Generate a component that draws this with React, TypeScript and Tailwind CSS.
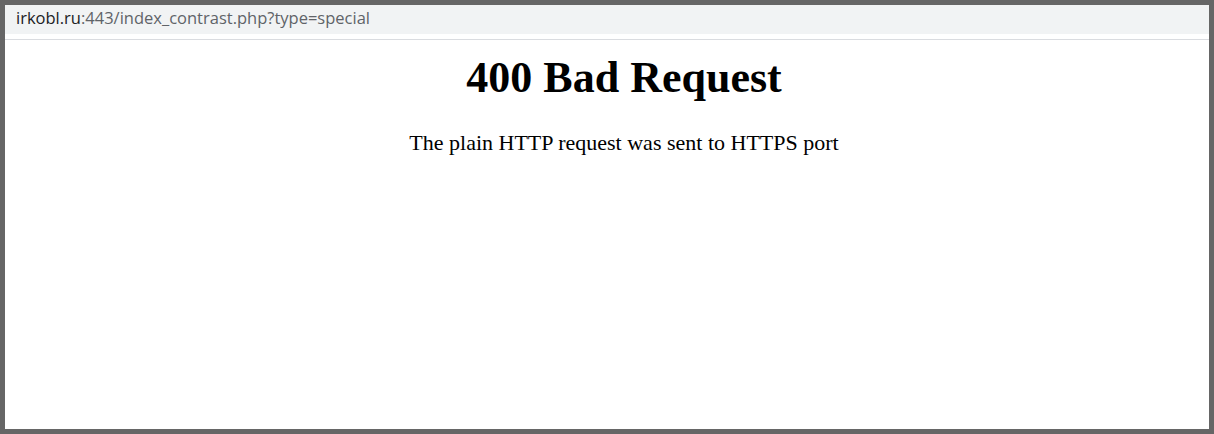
export default function App() {
  return (
    <div className="h-[434px] w-[1214px] overflow-hidden border-[5px] border-[#666666] bg-white">
      <div className="flex h-full flex-col">
        {/* address bar */}
        <div className="flex h-[29px] items-center bg-[#f1f3f4] pb-[3px] pl-[11px] font-['Open_Sans',sans-serif] text-[16.5px] leading-none">
          <span className="text-[#202124]">irkobl.ru</span>
          <span className="text-[#5f6368]">:443/index_contrast.php?type=special</span>
        </div>
        <div className="h-[5px] bg-white" />
        <div className="h-px bg-[#dadce0]" />
        {/* page */}
        <div className="flex flex-1 flex-col items-center pl-[34px] font-['Liberation_Serif',serif] text-black">
          <h1 className="mt-[13px] text-[44px] font-bold leading-[49px]">400 Bad Request</h1>
          <p className="mt-[29px] text-[22px] leading-[24px]">The plain HTTP request was sent to HTTPS port</p>
        </div>
      </div>
    </div>
  );
}
